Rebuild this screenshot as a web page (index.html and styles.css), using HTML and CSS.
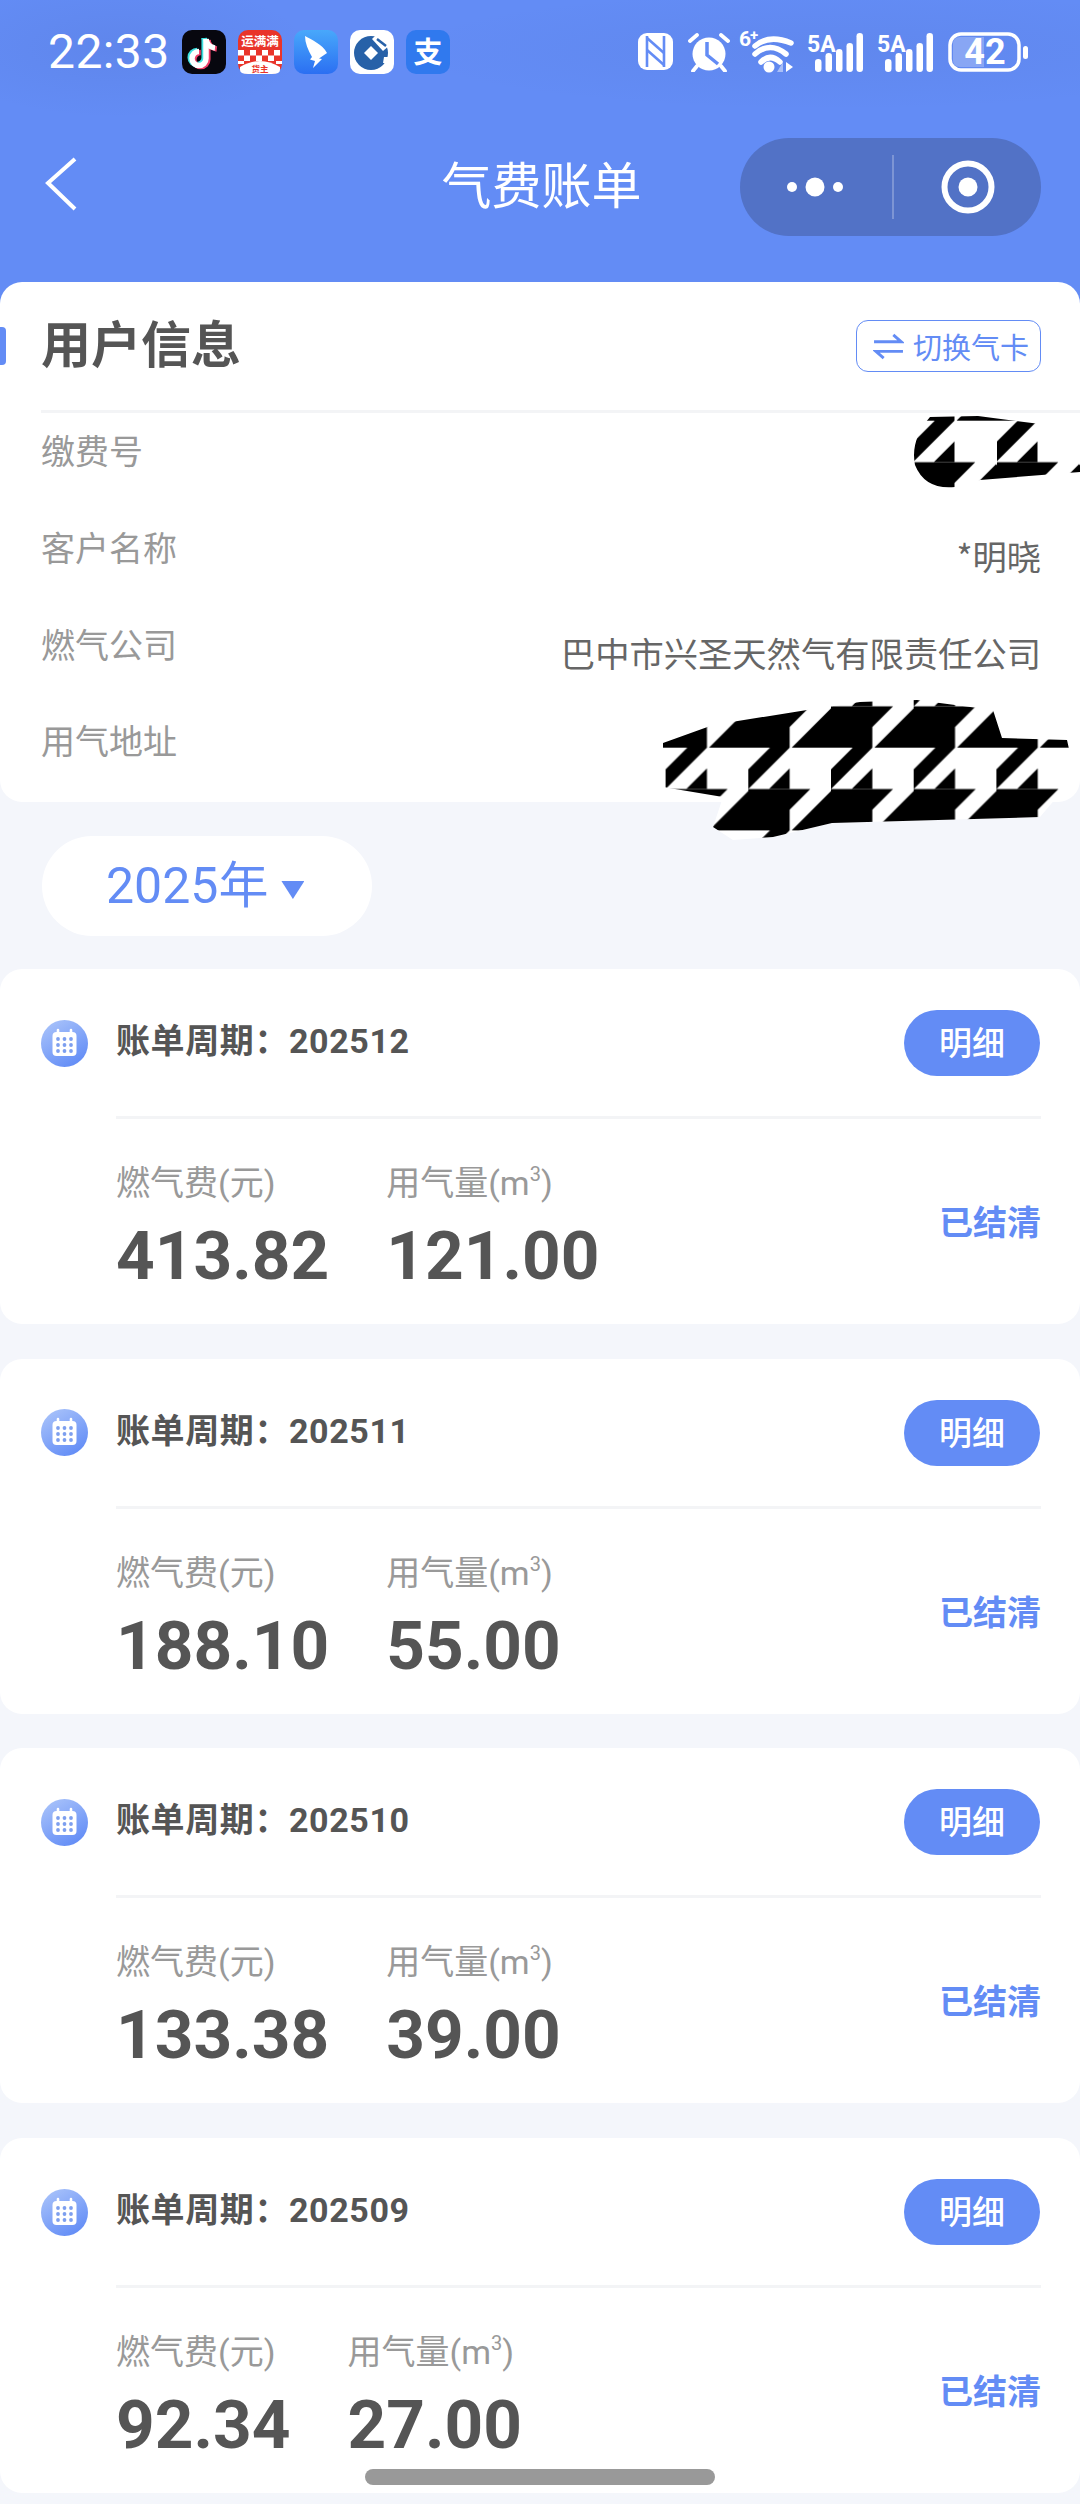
FILE: index.html
```html
<!DOCTYPE html>
<html lang="zh-CN">
<head>
<meta charset="utf-8">
<title>气费账单</title>
<link rel="stylesheet" href="styles.css">
</head>
<body>
<svg class="defs" width="0" height="0" aria-hidden="true">
  <defs>
    <linearGradient id="calGrad" x1="0.2" y1="0" x2="0.8" y2="1"><stop offset="0" stop-color="#a8c2fa"/><stop offset="1" stop-color="#5f8af6"/></linearGradient>
    <linearGradient id="dingGrad" x1="0" y1="0" x2="0" y2="1"><stop offset="0" stop-color="#48a8fb"/><stop offset="1" stop-color="#2b6ff2"/></linearGradient>
    <symbol id="cal" viewBox="0 0 47 47">
      <circle cx="23.5" cy="23.5" r="23.5" fill="url(#calGrad)"/>
      <rect x="11.5" y="12" width="24" height="24" rx="4" fill="#fff"/>
      <path d="M17 10v5M30 10v5" stroke="#fff" stroke-width="2.6" stroke-linecap="round"/>
      <g fill="#7d9fef"><circle cx="17" cy="19" r="1.9"/><circle cx="23.5" cy="19" r="1.9"/><circle cx="30" cy="19" r="1.9"/><circle cx="17" cy="25" r="1.9"/><circle cx="23.5" cy="25" r="1.9"/><circle cx="30" cy="25" r="1.9"/><circle cx="17" cy="31" r="1.9"/><circle cx="23.5" cy="31" r="1.9"/><circle cx="30" cy="31" r="1.9"/></g>
    </symbol>
    <symbol id="sig" viewBox="0 0 56 40">
      <text x="0" y="19" class="sig-text">5A</text>
      <g fill="#fff"><rect x="8" y="26" width="6.5" height="13" rx="3.2"/><rect x="18.5" y="20" width="6.5" height="19" rx="3.2"/><rect x="29" y="16" width="6.5" height="23" rx="3.2"/><rect x="39.500" y="10" width="6.500" height="29" rx="3.2"/><rect x="49.500" y="0" width="6.500" height="39" rx="3.2"/></g>
    </symbol>
  </defs>
</svg>

<header class="top">
  <div class="status">
    <div class="status-left">
      <span class="time">22:33</span>
      <div class="apps">
        <svg class="app" viewBox="0 0 44 44"><rect width="44" height="44" rx="10" fill="#07070f"/>
          <g fill="none" stroke-width="5.500"><g stroke="#3ee0e0" transform="translate(-1.800 -1)"><path d="M24 9V28.500A7 7 0 1 1 17 21.500"/><path d="M24 9Q25 17 33 18"/></g><g stroke="#f0406a" transform="translate(1.800 1)"><path d="M24 9V28.500A7 7 0 1 1 17 21.500"/><path d="M24 9Q25 17 33 18"/></g><g stroke="#fff"><path d="M24 9V28.500A7 7 0 1 1 17 21.500"/><path d="M24 9Q25 17 33 18"/></g></g></svg>
        <svg class="app" viewBox="0 0 44 44"><rect width="44" height="44" rx="10" fill="#e9342a"/>
          <text x="22" y="16" class="ymm-title">运满满</text>
          <g fill="#fff"><rect x="0" y="20" width="6" height="5.500"/><rect x="12" y="20" width="6" height="5.500"/><rect x="24" y="20" width="6" height="5.500"/><rect x="36" y="20" width="6" height="5.500"/><rect x="6" y="25.500" width="6" height="5.500"/><rect x="18" y="25.500" width="6" height="5.500"/><rect x="30" y="25.500" width="6" height="5.500"/><rect x="0" y="31" width="6" height="3"/><rect x="38" y="31" width="6" height="3"/></g>
          <path d="M2 37Q22 25 42 37V40Q42 44 34 44H10Q2 44 2 40Z" fill="#fff"/>
          <text x="22" y="42" class="ymm-sub">货主</text></svg>
        <svg class="app" viewBox="0 0 44 44"><rect width="44" height="44" rx="10" fill="url(#dingGrad)"/>
          <path d="M11 6C18 10 28 14 33 23L25 28.500L28 29L19 38L21 31L16 29.500L18 27C14 20 11 13 11 6Z" fill="#fff"/></svg>
        <svg class="app" viewBox="0 0 44 44"><rect width="44" height="44" rx="10" fill="#fff"/>
          <circle cx="21" cy="23" r="17" fill="#2761a8"/>
          <path d="M21 16L28 23L21 30L14 23Z" fill="#fff"/>
          <path d="M27 4L41 14L33 21L22 9Z" fill="#fff"/>
          <path d="M27 9L36 16" stroke="#2761a8" stroke-width="2.500"/>
          <path d="M34 27L42 27L42 33L33 33Z" fill="#fff"/></svg>
        <svg class="app" viewBox="0 0 44 44"><rect width="44" height="44" rx="10" fill="#3079ee"/>
          <text x="22" y="33" class="zhi">支</text></svg>
      </div>
    </div>
    <div class="status-right">
      <svg class="ic-nfc" viewBox="0 0 35 37"><rect width="35" height="37" rx="9" fill="#fff"/><g fill="none" stroke="#638cf5" stroke-width="2.600"><path d="M9 3V34M26 3V34"/><path d="M9 5L26 20"/><path d="M9 17L26 32"/></g></svg>
      <svg class="ic-alarm" viewBox="0 0 42 39"><circle cx="21" cy="21" r="16.500" fill="#fff"/><path d="M19 9V22L30 31" fill="none" stroke="#638cf5" stroke-width="3.500"/><path d="M2 8L9 2M40 8L33 2M9 33L5 38M33 33L37 38" stroke="#fff" stroke-width="3.800" stroke-linecap="round"/></svg>
      <svg class="ic-wifi" viewBox="0 -8 56 52"><text x="0" y="16" class="wifi-six">6</text><text x="11" y="10" class="wifi-plus">+</text><g fill="none" stroke="#fff" stroke-width="5.500" stroke-linecap="round"><path d="M16 16Q30 4 52 13"/><path d="M16 24Q31 11 47 24"/><path d="M22 32Q31 23 41 32"/></g><circle cx="30" cy="37" r="5.500" fill="#fff"/><path d="M47 32L54 37L47 42Z" fill="#fff"/><path d="M44 32V42H38Z" fill="#a9bff7"/></svg>
      <svg class="ic-sig"><use href="#sig"/></svg>
      <svg class="ic-sig"><use href="#sig"/></svg>
      <svg class="ic-bat" viewBox="0 0 81 40"><rect x="2" y="2" width="69" height="36" rx="11" fill="none" stroke="#fff" stroke-width="3.500"/><path d="M5 12Q5 5 12 5H36V35H12Q5 35 5 28Z" fill="#fff" fill-opacity=".25"/><text x="37" y="32" class="bat-text">42</text><rect x="75" y="14" width="5" height="13" rx="2.500" fill="#fff"/></svg>
    </div>
  </div>
  <nav class="nav">
    <svg class="back" viewBox="0 0 32 56"><path d="M30 3L3 27L30 53" fill="none" stroke="#fff" stroke-width="4"/></svg>
    <h1 class="title">气费账单</h1>
    <div class="capsule">
      <svg class="cap-dots" viewBox="0 0 58 20"><circle cx="5" cy="10" r="5" fill="#fff"/><circle cx="28" cy="10" r="9.500" fill="#fff"/><circle cx="51" cy="10" r="5" fill="#fff"/></svg>
      <span class="cap-line"></span>
      <svg class="cap-target" viewBox="0 0 54 54"><circle cx="27" cy="27" r="23.500" fill="none" stroke="#fff" stroke-width="6"/><circle cx="27" cy="27" r="9.500" fill="#fff"/></svg>
    </div>
  </nav>
</header>

<main class="page">
  <section class="info">
    <span class="accent"></span>
    <div class="info-head">
      <h2 class="info-title">用户信息</h2>
      <button class="switch">
        <svg class="switch-ic" viewBox="0 0 32 28"><path d="M1 9H29L21 2M31 19H3L11 26" fill="none" stroke="#638cf5" stroke-width="3"/></svg>
        <span>切换气卡</span>
      </button>
    </div>
    <div class="info-rows">
      <div class="row"><span class="row-label">缴费号</span></div>
      <div class="row"><span class="row-label">客户名称</span><span class="row-value">*明晓</span></div>
      <div class="row"><span class="row-label">燃气公司</span><span class="row-value">巴中市兴圣天然气有限责任公司</span></div>
      <div class="row"><span class="row-label">用气地址</span></div>
    </div>
  </section>

  <button class="year"><span>2025年</span><i class="caret"></i></button>

  <div class="bills">
    <article class="bill">
      <div class="bill-head">
        <svg class="cal"><use href="#cal"/></svg>
        <span class="period">账单周期：202512</span>
        <a class="detail">明细</a>
      </div>
      <div class="bill-body">
        <div class="col"><span class="col-label">燃气费(元)</span><strong class="col-num">413.82</strong></div>
        <div class="col"><span class="col-label">用气量(m<sup>3</sup>)</span><strong class="col-num">121.00</strong></div>
        <span class="state">已结清</span>
      </div>
    </article>
    <article class="bill">
      <div class="bill-head">
        <svg class="cal"><use href="#cal"/></svg>
        <span class="period">账单周期：202511</span>
        <a class="detail">明细</a>
      </div>
      <div class="bill-body">
        <div class="col"><span class="col-label">燃气费(元)</span><strong class="col-num">188.10</strong></div>
        <div class="col"><span class="col-label">用气量(m<sup>3</sup>)</span><strong class="col-num">55.00</strong></div>
        <span class="state">已结清</span>
      </div>
    </article>
    <article class="bill">
      <div class="bill-head">
        <svg class="cal"><use href="#cal"/></svg>
        <span class="period">账单周期：202510</span>
        <a class="detail">明细</a>
      </div>
      <div class="bill-body">
        <div class="col"><span class="col-label">燃气费(元)</span><strong class="col-num">133.38</strong></div>
        <div class="col"><span class="col-label">用气量(m<sup>3</sup>)</span><strong class="col-num">39.00</strong></div>
        <span class="state">已结清</span>
      </div>
    </article>
    <article class="bill">
      <div class="bill-head">
        <svg class="cal"><use href="#cal"/></svg>
        <span class="period">账单周期：202509</span>
        <a class="detail">明细</a>
      </div>
      <div class="bill-body">
        <div class="col"><span class="col-label">燃气费(元)</span><strong class="col-num">92.34</strong></div>
        <div class="col"><span class="col-label">用气量(m<sup>3</sup>)</span><strong class="col-num">27.00</strong></div>
        <span class="state">已结清</span>
      </div>
    </article>
  </div>
</main>

<svg class="mask mask-a" viewBox="905 405 175 95" aria-hidden="true">
  <defs>
    <pattern id="tooth-a" patternUnits="userSpaceOnUse" x="913" y="420.700" width="83" height="83" viewBox="0 0 4 4">
      <g id="tooth">
        <path d="M2 2H3L2 3V4H-1.900L0 2.100V2Z"/><path d="M2 1V2H1Z"/><path d="M1.050 0H2L0 2V1.050Z"/>
      </g>
      <use href="#tooth" x="4"/>
    </pattern>
    <clipPath id="clip-a"><path d="M930 417L978 416L1040 424L1080 424V472L980 480L955 487Q925 490 915 465Q910 440 930 417Z"/></clipPath>
  </defs>
  <g clip-path="url(#clip-a)"><rect x="905" y="405" width="175" height="95" fill="#fff"/><rect x="905" y="405" width="175" height="95" fill="url(#tooth-a)"/></g>
</svg>
<svg class="mask mask-b" viewBox="660 695 420 150" aria-hidden="true">
  <defs>
    <pattern id="tooth-b" patternUnits="userSpaceOnUse" x="748.300" y="747.700" width="82.700" height="82.700" viewBox="0 0 4 4">
      <use href="#tooth"/><use href="#tooth" x="4"/>
    </pattern>
    <clipPath id="clip-b"><path d="M663 743L713 725L807 710L860 702L917 700L993 710L1002 738L1067 740L1073 767L1057 797L1040 817L832 823L773 837L733 840L713 827L723 797L663 787Z"/></clipPath>
  </defs>
  <g clip-path="url(#clip-b)"><rect x="660" y="695" width="420" height="150" fill="#fff"/><rect x="660" y="695" width="420" height="150" fill="url(#tooth-b)"/></g>
</svg>

<div class="home"></div>
</body>
</html>
```

FILE: styles.css
```css
* { box-sizing: border-box; }
html, body { margin: 0; padding: 0; }
html { overflow: hidden; }
body {
  position: relative;
  width: 1080px;
  height: 2504px;
  overflow: hidden;
  background: #f4f6fb;
  font-family: Roboto, "Noto Sans CJK SC", sans-serif;
  color: #555;
}
.defs { position: absolute; }

/* header */
.top {
  height: 306px;
  padding-bottom: 70px;
  background:
    radial-gradient(ellipse 190px 70px at 120px 48px, rgba(60, 80, 150, .10), transparent),
    radial-gradient(ellipse 430px 60px at 830px 50px, rgba(60, 80, 150, .08), transparent),
    #638cf5;
  color: #fff;
}
.status {
  height: 100px;
  padding: 30px 51px 0 48px;
  display: flex;
  justify-content: space-between;
  align-items: flex-start;
}
.status-left { display: flex; align-items: center; height: 44px; }
.time { font-size: 48px; line-height: 44px; letter-spacing: .4px; width: 134px; }
.apps { display: flex; gap: 12px; }
.app { width: 44px; height: 44px; display: block; }
.ymm-title { font: 700 12.500px "Noto Sans CJK SC", sans-serif; fill: #fff; text-anchor: middle; }
.ymm-sub { font: 700 8.500px "Noto Sans CJK SC", sans-serif; fill: #e9342a; text-anchor: middle; }
.zhi { font: 700 29px "Noto Sans CJK SC", sans-serif; fill: #fff; text-anchor: middle; }

.status-right { display: flex; align-items: flex-start; }
.ic-nfc { width: 35px; height: 37px; margin-top: 3px; }
.ic-alarm { width: 42px; height: 39px; margin: 3px 0 0 15px; }
.ic-wifi { width: 56px; height: 52px; margin: -8px 0 0 9px; }
.ic-sig { width: 56px; height: 40px; margin: 3px 0 0 12px; }
.ic-sig + .ic-sig { margin-left: 14px; }
.ic-bat { width: 81px; height: 40px; margin: 2px 0 0 15px; }
.sig-text { font: 700 23px Roboto, sans-serif; fill: #fff; }
.wifi-six { font: 700 21px Roboto, sans-serif; fill: #fff; }
.wifi-plus { font: 700 15px Roboto, sans-serif; fill: #fff; }
.bat-text { font: 700 36px Roboto, sans-serif; fill: #fff; text-anchor: middle; }

.nav {
  margin-top: 38px;
  height: 98px;
  padding: 0 39px 0 45px;
  display: grid;
  grid-template-columns: 1fr auto 1fr;
  align-items: center;
}
.back { width: 32px; height: 56px; margin-top: -6px; display: block; }
.title {
  margin: -10px 3px 0 0;
  font: 400 50px/60px "Noto Sans CJK SC", sans-serif;
  color: #fff;
}
.capsule {
  justify-self: end;
  width: 301px;
  height: 98px;
  border-radius: 49px;
  background: #5272c6;
  display: flex;
  align-items: center;
  padding-left: 47px;
}
.cap-dots { width: 58px; height: 20px; }
.cap-line { width: 2px; height: 64px; margin-left: 47px; background: rgba(255, 255, 255, .25); }
.cap-target { width: 54px; height: 54px; margin-left: 47px; }

/* user info card */
.page { margin-top: -24px; position: relative; }
.info {
  position: relative;
  height: 520px;
  background: #fff;
  border-radius: 22px;
}
.accent {
  position: absolute;
  left: 0;
  top: 45px;
  width: 6px;
  height: 38px;
  background: #638cf5;
  border-radius: 0 4px 4px 0;
}
.info-head {
  height: 131px;
  margin-left: 41px;
  padding: 33px 39px 0 0;
  border-bottom: 3px solid #f3f4f6;
  display: flex;
  justify-content: space-between;
  align-items: flex-start;
}
.info-title {
  margin: 0;
  font: 700 50px/52px "Noto Sans CJK SC", sans-serif;
  color: #555;
}
.switch {
  width: 185px;
  height: 52px;
  margin-top: 5px;
  padding: 0 0 0 16px;
  background: #fff;
  border: 1.500px solid #638cf5;
  border-radius: 12px;
  display: flex;
  align-items: center;
  gap: 9px;
  font: 400 29px/52px "Noto Sans CJK SC", sans-serif;
  color: #638cf5;
}
.switch-ic { width: 31px; height: 27px; flex: none; }
.info-rows {
  padding: 12px 39px 0 41px;
  display: flex;
  flex-direction: column;
  gap: 47px;
}
.row {
  height: 50px;
  display: flex;
  justify-content: space-between;
  align-items: flex-start;
  font: 400 34px/50px "Noto Sans CJK SC", sans-serif;
}
.row:last-child { margin-top: -1px; }
.row-label { color: #999; }
.row-value { color: #666; margin-top: 8px; font-size: 34.300px; }

/* year */
.year {
  margin: 34px 0 0 42px;
  width: 330px;
  height: 100px;
  padding: 0 0 0 64px;
  border: 0;
  border-radius: 50px;
  background: #fff;
  display: flex;
  align-items: center;
  gap: 13px;
  font: 400 50px/60px Roboto, "Noto Sans CJK SC", sans-serif;
  color: #638cf5;
}
.caret {
  width: 23px;
  height: 18px;
  margin-top: 8px;
  background: #638cf5;
  clip-path: polygon(0 0, 100% 0, 50% 100%);
}

/* bills */
.bills {
  margin-top: 33px;
  display: flex;
  flex-direction: column;
  gap: 34.700px;
}
.bill {
  height: 355px;
  background: #fff;
  border-radius: 22px;
  padding: 41px 39px 0 41px;
}
.bill-head {
  height: 66px;
  display: flex;
  align-items: center;
}
.cal { width: 47px; height: 47px; flex: none; }
.period {
  margin-left: 28px;
  flex: 1;
  font: 700 34px/62px Roboto, "Noto Sans CJK SC", sans-serif;
  letter-spacing: .6px;
  color: #555;
  align-self: flex-start;
}
.detail {
  width: 136px;
  height: 66px;
  margin-right: 1px;
  border-radius: 33px;
  background: #638cf5;
  color: #fff;
  text-align: center;
  font: 500 33px/62px "Noto Sans CJK SC", sans-serif;
}
.bill-body {
  margin: 40px 0 0 75px;
  padding-top: 41px;
  border-top: 3px solid #f3f4f6;
  display: flex;
  gap: 57px;
  position: relative;
}
.col { display: flex; flex-direction: column; }
.col-label {
  font: 400 34px/46px Roboto, "Noto Sans CJK SC", sans-serif;
  color: #999;
  white-space: nowrap;
}
.col-label sup { font-size: 20px; line-height: 0; vertical-align: 14px; }
.col-num {
  margin-top: 10px;
  font: 700 67.500px/80px Roboto, sans-serif;
  color: #555;
}
.state {
  margin-left: auto;
  margin-top: 36px;
  font: 700 34px/50px "Noto Sans CJK SC", sans-serif;
  color: #638cf5;
}

/* overlays */
.mask { position: absolute; }
.mask-a { left: 905px; top: 405px; width: 175px; height: 95px; }
.mask-b { left: 660px; top: 695px; width: 420px; height: 150px; }
.home {
  position: absolute;
  left: 365px;
  top: 2469px;
  width: 350px;
  height: 16px;
  border-radius: 8px;
  background: #999;
}
```
